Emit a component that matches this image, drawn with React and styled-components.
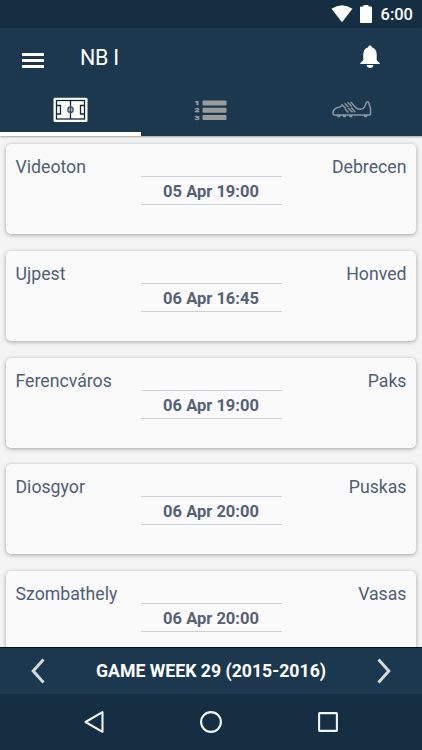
import React from 'react';
import styled, { createGlobalStyle } from 'styled-components';

const matches = [
  { home: 'Videoton', away: 'Debrecen', date: '05 Apr 19:00' },
  { home: 'Ujpest', away: 'Honved', date: '06 Apr 16:45' },
  { home: 'Ferencváros', away: 'Paks', date: '06 Apr 19:00' },
  { home: 'Diosgyor', away: 'Puskas', date: '06 Apr 20:00' },
  { home: 'Szombathely', away: 'Vasas', date: '06 Apr 20:00' },
];

const WifiIcon = () => (
  <svg width="22" height="18" viewBox="0 0 22 18" fill="#fff">
    <path d="M0.5 3.8Q11 -3.4 21.5 3.8L11 17.2Z" />
  </svg>
);

const BatteryIcon = () => (
  <svg width="12" height="18" viewBox="0 0 12 18" fill="#fff">
    <path d="M3.5 0h5v1.5H11q1 0 1 1V17q0 1-1 1H1q-1 0-1-1V2.5q0-1 1-1h2.5z" />
  </svg>
);

const BellIcon = () => (
  <svg width="20" height="24" viewBox="0 0 20 24" fill="#fff">
    <path d="M10 .5c1 0 1.7.7 1.8 1.7 3.2.9 4.9 3.6 4.9 7.3v5.8l3 2.7v1H.3v-1l3-2.7V9.5c0-3.7 1.7-6.4 4.9-7.3C8.3 1.2 9 .5 10 .5z" />
    <path d="M6.5 20h7c-.5 2-1.7 3-3.5 3s-3-1-3.5-3z" />
  </svg>
);

const PitchIcon = () => (
  <svg width="35" height="26" viewBox="0 0 35 26" fill="none">
    <rect x="0.5" y="0.7" width="34" height="24.3" rx="1.5" fill="#fff" />
    <g stroke="#10263f" strokeWidth="1.3">
      <rect x="3.5" y="3.5" width="28" height="18.5" />
      <path d="M17.5 3.5v18.5M3.5 8.5h4v8.5h-4M31.5 8.5h-4v8.5h4" />
      <circle cx="17.5" cy="12.7" r="2.7" fill="#b9c3cb" stroke="#3d5266" />
      <path d="M17.5 9.5v6.5" stroke="#3d5266" />
    </g>
  </svg>
);

const TableIcon = () => (
  <svg width="34" height="22" viewBox="0 0 34 22" fill="#9b9b9b">
    <rect x="8.5" y="1.6" width="24" height="5" rx="1" />
    <rect x="8.5" y="8.7" width="24" height="5" rx="1" />
    <rect x="8.5" y="16" width="24" height="5" rx="1" />
    <g fontSize="6" fontWeight="900" stroke="#9b9b9b" strokeWidth="0.3">
      <text x="0.5" y="6.2" textLength="5" lengthAdjust="spacingAndGlyphs">1</text>
      <text x="0.5" y="13.4" textLength="5" lengthAdjust="spacingAndGlyphs">2</text>
      <text x="0.5" y="20.7" textLength="5" lengthAdjust="spacingAndGlyphs">3</text>
    </g>
  </svg>
);

const ShoeIcon = () => (
  <svg width="40" height="18" viewBox="0 0 40 18" fill="none" stroke="#8c969e" strokeWidth="1.5" strokeLinejoin="round">
    <path d="M10 5L3.8 7.4Q1 9 .9 12.2q0 1.8 1.6 1.8h34.3q1.8 0 1.8-1.8L38.4 7 36.6 1.3Q35.2 0 34.2 1.7L32.5 6q-1.2 2.2-4.3 2.2-3 0-4.8-2L18.7.9" />
    <path d="M9.5 3.3l4.5 4.4M12.7 2.2l3.5 3.7M15.7 1.2l4 4.3M13 8l3.5 3.5M16.2 7l4.3 4.3M19.2 6.5l4 4.8" />
    <g fill="#8c969e" stroke="none">
      <path d="M5 14h3.6l-.5 2.3H5.5zM10.6 14h3.6l-.5 2.3h-2.6zM17 14h3.6l-.5 2.3h-2.6zM31.5 14h4l-.5 2.3h-2.9z" />
    </g>
  </svg>
);

const App = () => {
  return (
    <Screen>
      <GlobalStyle />
      <StatusBar>
        <WifiIcon />
        <BatteryIcon />
        <span>6:00</span>
      </StatusBar>
      <Header>
        <Toolbar>
          <MenuButton aria-label="Menu">
            <i />
            <i />
            <i />
          </MenuButton>
          <h1>NB I</h1>
          <BellIcon />
        </Toolbar>
        <Tabs>
          <Tab $active>
            <PitchIcon />
          </Tab>
          <Tab>
            <TableIcon />
          </Tab>
          <Tab>
            <ShoeIcon />
          </Tab>
        </Tabs>
      </Header>
      <MatchList>
        {matches.map((match) => (
          <Card key={match.home}>
            <Team>{match.home}</Team>
            <Kickoff>{match.date}</Kickoff>
            <Team $away>{match.away}</Team>
          </Card>
        ))}
      </MatchList>
      <WeekBar>
        <Arrow aria-label="Previous week">
          <svg width="14" height="26" viewBox="0 0 14 26">
            <path d="M12.5 1.5L2.2 13l10.3 11.5" />
          </svg>
        </Arrow>
        <p>GAME WEEK 29 (2015-2016)</p>
        <Arrow aria-label="Next week">
          <svg width="14" height="26" viewBox="0 0 14 26">
            <path d="M1.5 1.5L11.8 13 1.5 24.5" />
          </svg>
        </Arrow>
      </WeekBar>
      <NavBar>
        <svg width="24" height="24" viewBox="0 0 24 24">
          <path d="M20.5 2.2v19.6L3.5 12z" />
        </svg>
        <svg width="24" height="24" viewBox="0 0 24 24">
          <circle cx="12" cy="12" r="9.9" />
        </svg>
        <svg width="24" height="24" viewBox="0 0 24 24">
          <rect x="3.1" y="3.1" width="17.8" height="17.8" rx="0.5" />
        </svg>
      </NavBar>
    </Screen>
  );
};

export default App;

const GlobalStyle = createGlobalStyle`
  * {
    box-sizing: border-box;
  }

  body {
    margin: 0;
    font-family: Roboto, 'Liberation Sans', sans-serif;
  }
`;

const Screen = styled.div`
  display: flex;
  flex-direction: column;
  width: 422px;
  height: 750px;
  overflow: hidden;
  background-color: #f4f4f4;
`;

const StatusBar = styled.div`
  display: flex;
  flex: 0 0 28px;
  align-items: center;
  justify-content: flex-end;
  padding-right: 9px;
  background-color: #152e42;
  color: white;

  svg + svg {
    margin-left: 7px;
  }

  span {
    margin-left: 9px;
    padding-top: 2px;
    font-size: 16.5px;
    font-weight: 500;
    line-height: 20px;
  }
`;

const Header = styled.header`
  z-index: 1;
  flex: 0 0 108px;
  background-color: #1b384f;
  box-shadow: 0 1px 2px rgba(0, 0, 0, 0.35);
`;

const Toolbar = styled.div`
  display: flex;
  align-items: center;
  height: 57px;
  padding: 0 42px 0 22px;

  h1 {
    flex: 1;
    margin: 3px 0 0 36px;
    color: white;
    font-size: 21.5px;
    font-weight: 400;
    line-height: 26px;
    letter-spacing: -0.3px;
  }
`;

const MenuButton = styled.button`
  display: flex;
  flex-direction: column;
  gap: 3.5px;
  width: 22px;
  margin-top: 8px;
  padding: 0;
  border: none;
  background: none;

  i {
    width: 22px;
    height: 2.8px;
    background-color: white;
  }
`;

const Tabs = styled.div`
  display: grid;
  grid-template-columns: repeat(3, 1fr);
  height: 51px;
`;

const Tab = styled.div`
  display: flex;
  align-items: center;
  justify-content: center;
  border-bottom: 4px solid ${(props) => (props.$active ? 'white' : 'transparent')};
  padding-top: 3px;
`;

const MatchList = styled.main`
  display: flex;
  flex: 1;
  flex-direction: column;
  gap: 16.7px;
  min-height: 0;
  padding: 8.3px 6px 0;
  overflow: hidden;
`;

const Card = styled.article`
  display: grid;
  flex: 0 0 90px;
  grid-template-columns: 1fr 141px 1fr;
  align-items: start;
  padding: 0 9.5px;
  border-radius: 5px;
  background-color: #fafafa;
  box-shadow: 0 1px 4px rgba(0, 0, 0, 0.34);
`;

const Team = styled.span`
  padding-top: 13px;
  color: #505e76;
  font-size: 17.7px;
  line-height: 21px;
  text-align: ${(props) => (props.$away ? 'right' : 'left')};
`;

const Kickoff = styled.time`
  height: 29px;
  margin-top: 32px;
  border: solid #cdd1d7;
  border-width: 1px 0;
  color: #556176;
  font-size: 16.5px;
  font-weight: 700;
  line-height: 29px;
  text-align: center;
`;

const WeekBar = styled.div`
  display: flex;
  flex: 0 0 47px;
  align-items: center;
  justify-content: space-between;
  padding: 0 31px;
  border-top: 1px solid #06131f;
  background-color: #1b384f;

  p {
    margin: 0;
    color: white;
    font-size: 17.7px;
    font-weight: 700;
  }
`;

const Arrow = styled.button`
  display: flex;
  padding: 0;
  border: none;
  background: none;

  path {
    fill: none;
    stroke: #d3d9de;
    stroke-width: 3;
  }
`;

const NavBar = styled.nav`
  display: flex;
  flex: 0 0 56px;
  align-items: center;
  justify-content: space-between;
  padding: 0 82px;
  background-color: #152e42;

  svg {
    fill: none;
    stroke: #f1f3f4;
    stroke-width: 2.1;
    stroke-linejoin: round;
  }
`;
